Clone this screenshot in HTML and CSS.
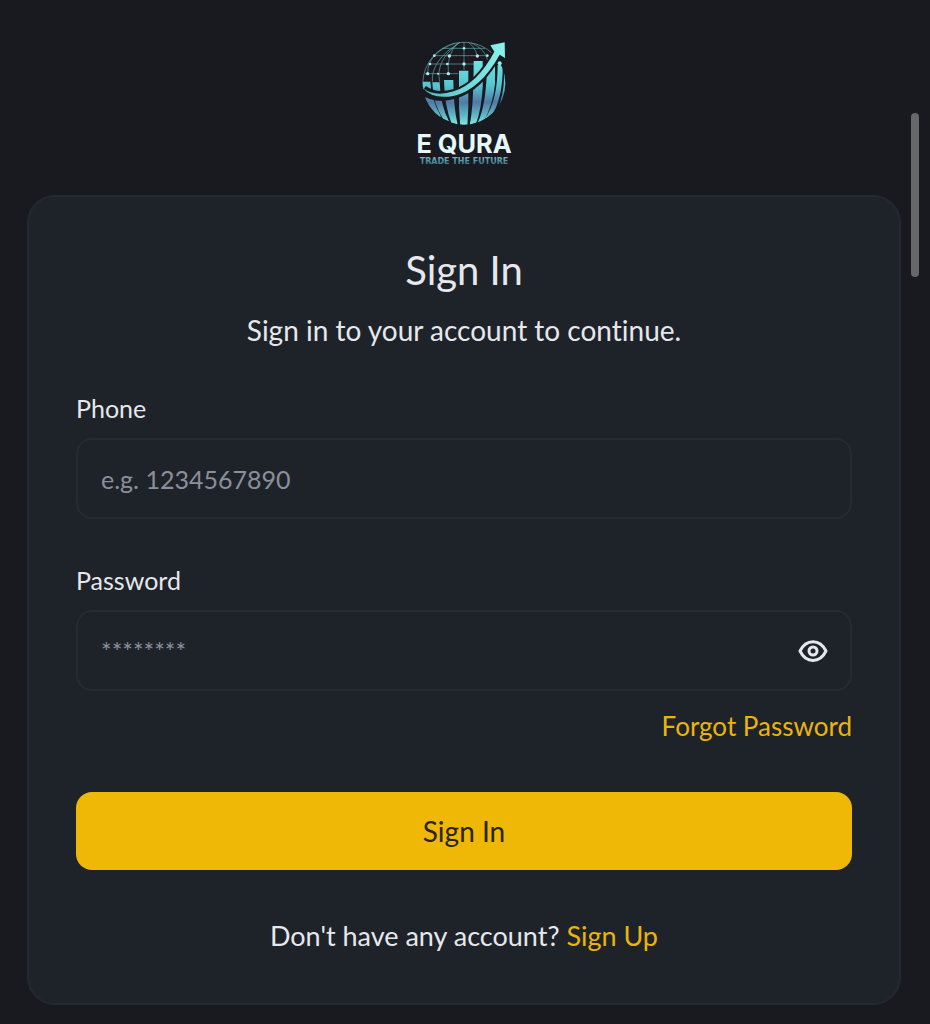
FILE: index.html
```html
<!DOCTYPE html>
<html lang="en">
  <head>
    <meta charset="utf-8" />
    <title>Sign In - E QURA</title>
    <meta name="viewport" content="width=device-width, initial-scale=1" />
    <link rel="stylesheet" href="styles.css">
  </head>
  <body>
    <header class="header">
      <svg class="logo" viewBox="27 24 300 378" role="img" aria-label="E QURA">
        <defs>
          <linearGradient id="bars" x1="0" y1="90" x2="0" y2="285" gradientUnits="userSpaceOnUse">
            <stop offset="0" stop-color="#6fe6e4" />
            <stop offset="0.4" stop-color="#56c4cf" />
            <stop offset="0.65" stop-color="#5179a6" />
            <stop offset="0.85" stop-color="#5fb8c6" />
            <stop offset="1" stop-color="#7fe9e6" />
          </linearGradient>
          <linearGradient id="arrow" x1="55" y1="0" x2="300" y2="0" gradientUnits="userSpaceOnUse">
            <stop offset="0" stop-color="#4fb9c0" />
            <stop offset="1" stop-color="#8af3ee" />
          </linearGradient>
          <linearGradient id="tag" x1="0" y1="382" x2="0" y2="400" gradientUnits="userSpaceOnUse">
            <stop offset="0" stop-color="#62b9c2" />
            <stop offset="1" stop-color="#49788f" />
          </linearGradient>
          <clipPath id="globe"><circle cx="177" cy="160" r="124" /></clipPath>
        </defs>
        <!-- grid -->
        <g fill="none" stroke="#64a9af" stroke-width="2">
          <path d="M54 170A124 124 0 0 1 262 70" />
          <path d="M68 130Q68 70 150 39M130 132Q124 75 158 38M177 36V120M217 78Q210 50 190 37M82 155Q78 90 165 37M104 155Q90 90 165 37M248 90Q238 55 198 38" />
          <path d="M111 55H240M88 77H250M70 102H215M60 131H160" />
        </g>
        <g fill="#a9eeee">
          <circle cx="88" cy="77" r="4" /><circle cx="133" cy="78" r="5" />
          <circle cx="177" cy="102" r="5" /><circle cx="217" cy="78" r="5" />
          <circle cx="127" cy="102" r="4" /><circle cx="75" cy="102" r="4" />
          <circle cx="68" cy="131" r="5" /><circle cx="130" cy="131" r="5" />
          <circle cx="99" cy="131" r="3" /><circle cx="177" cy="55" r="4" />
          <circle cx="247" cy="77" r="4" />
        </g>
        <!-- bars running down into the globe -->
        <g fill="url(#bars)" clip-path="url(#globe)">
          <path d="M52 155H76Q78 205 108 260L90 262Q54 215 52 155Z" />
          <path d="M82 157H104Q106 225 132 274L114 266Q83 220 82 157Z" />
          <path d="M117 150H145Q145 230 158 284L140 282Q118 225 117 150Z" />
          <path d="M162 122H190V230L187 290H166L162 230Z" />
          <path d="M206 93H233V170Q230 235 212 285H194Q206 230 206 93Z" />
          <path d="M246 92H270V160Q266 220 234 280L218 278Q246 220 246 92Z" />
          <path d="M278 105H293Q294 210 258 258L240 266Q278 210 278 105Z" />
          <path d="M297 130H304V180Q298 220 274 246Q299 195 297 130Z" />
        </g>
        <circle cx="284" cy="100" r="6" fill="#8af3ee" />
        <!-- arrow -->
        <path d="M54 180Q92 208 148 192Q222 171 278 66" fill="none" stroke="#191a1f" stroke-width="30" />
        <path d="M54 175Q90 202 146 184Q218 160 268 65L256 46L299 37L300 84L284 74Q226 178 148 197Q84 210 54 175Z" fill="url(#arrow)" />
        <text class="logo-name" x="177" y="370" text-anchor="middle">E QURA</text>
        <text class="logo-tag" x="177" y="401" text-anchor="middle">TRADE THE FUTURE</text>
      </svg>
    </header>
    <main class="card">
      <h1>Sign In</h1>
      <p class="subtitle">Sign in to your account to continue.</p>
      <form>
        <div class="field">
          <label for="phone">Phone</label>
          <input id="phone" type="tel" placeholder="e.g. 1234567890" />
        </div>
        <div class="field">
          <label for="password">Password</label>
          <div class="password">
            <input id="password" type="password" placeholder="********" />
            <button type="button" class="eye" aria-label="Show password">
              <svg viewBox="0 0 32 24" fill="none" stroke="currentColor" stroke-width="3">
                <path d="M3 12C9 -.5 23 -.5 29 12C23 24.500 9 24.500 3 12Z" stroke-linejoin="round" />
                <circle cx="16" cy="12" r="4" />
              </svg>
            </button>
          </div>
        </div>
        <a class="forgot" href="#">Forgot Password</a>
        <button type="submit" class="submit">Sign In</button>
      </form>
      <p class="signup">Don't have any account? <a href="#">Sign Up</a></p>
    </main>
    <div class="scroll-thumb"></div>
  </body>
</html>
```
FILE: styles.css
```css
* {
  box-sizing: border-box;
}
body {
  margin: 0;
  padding: 38px 29px 20px 27px;
  background: #191a1f;
  color: #e6e8ed;
  font-family: Lato, "Open Sans", sans-serif;
  font-size: 28px;
  font-variant-ligatures: none;
  line-height: 40px;
}
a {
  color: #eab40d;
  text-decoration: none;
}
h1,
p {
  margin: 0;
  text-align: center;
}
.header {
  display: flex;
  justify-content: center;
  margin-bottom: 31px;
}
.logo {
  width: 100px;
  height: 126px;
  overflow: visible;
}
.logo-name {
  font: bold 76px Inter, sans-serif;
  fill: #e4f8f8;
}
.logo-tag {
  font: bold 24px "DejaVu Sans", sans-serif;
  fill: url(#tag);
}
.card {
  padding: 47px;
  border: 2px solid #242930;
  border-radius: 28px;
  background: #1e2329;
}
h1 {
  font-size: 40px;
  font-weight: normal;
  line-height: 52px;
}
.subtitle {
  margin: 14px 0 38px;
}
.field {
  margin-bottom: 41px;
}
label {
  display: block;
  margin-bottom: 10px;
  font-size: 25px;
}
input {
  display: block;
  width: 100%;
  height: 81px;
  padding: 0 23px;
  border: 2px solid #262b33;
  border-radius: 16px;
  outline: none;
  background: transparent;
  color: inherit;
  font: inherit;
  font-size: 25px;
}
input::placeholder {
  color: #8b8f9b;
  opacity: 1;
}
.password {
  position: relative;
}
.password input {
  padding-right: 72px;
}
.eye {
  position: absolute;
  top: 50%;
  right: 23px;
  width: 32px;
  height: 24px;
  padding: 0;
  border: 0;
  background: none;
  color: #e6e8ed;
  transform: translateY(-50%);
  cursor: pointer;
}
.eye svg {
  display: block;
}
.forgot {
  display: block;
  width: fit-content;
  margin: -26px 0 46px auto;
  font-size: 26px;
}
.submit {
  display: block;
  width: 100%;
  height: 78px;
  border: 0;
  border-radius: 16px;
  background: #efb807;
  color: #2a2413;
  font: inherit;
  cursor: pointer;
}
.signup {
  margin-top: 46px;
  font-size: 27px;
}
.scroll-thumb {
  position: fixed;
  top: 113px;
  right: 11px;
  width: 8px;
  height: 164px;
  border-radius: 4px;
  background: #68686b;
}
```
